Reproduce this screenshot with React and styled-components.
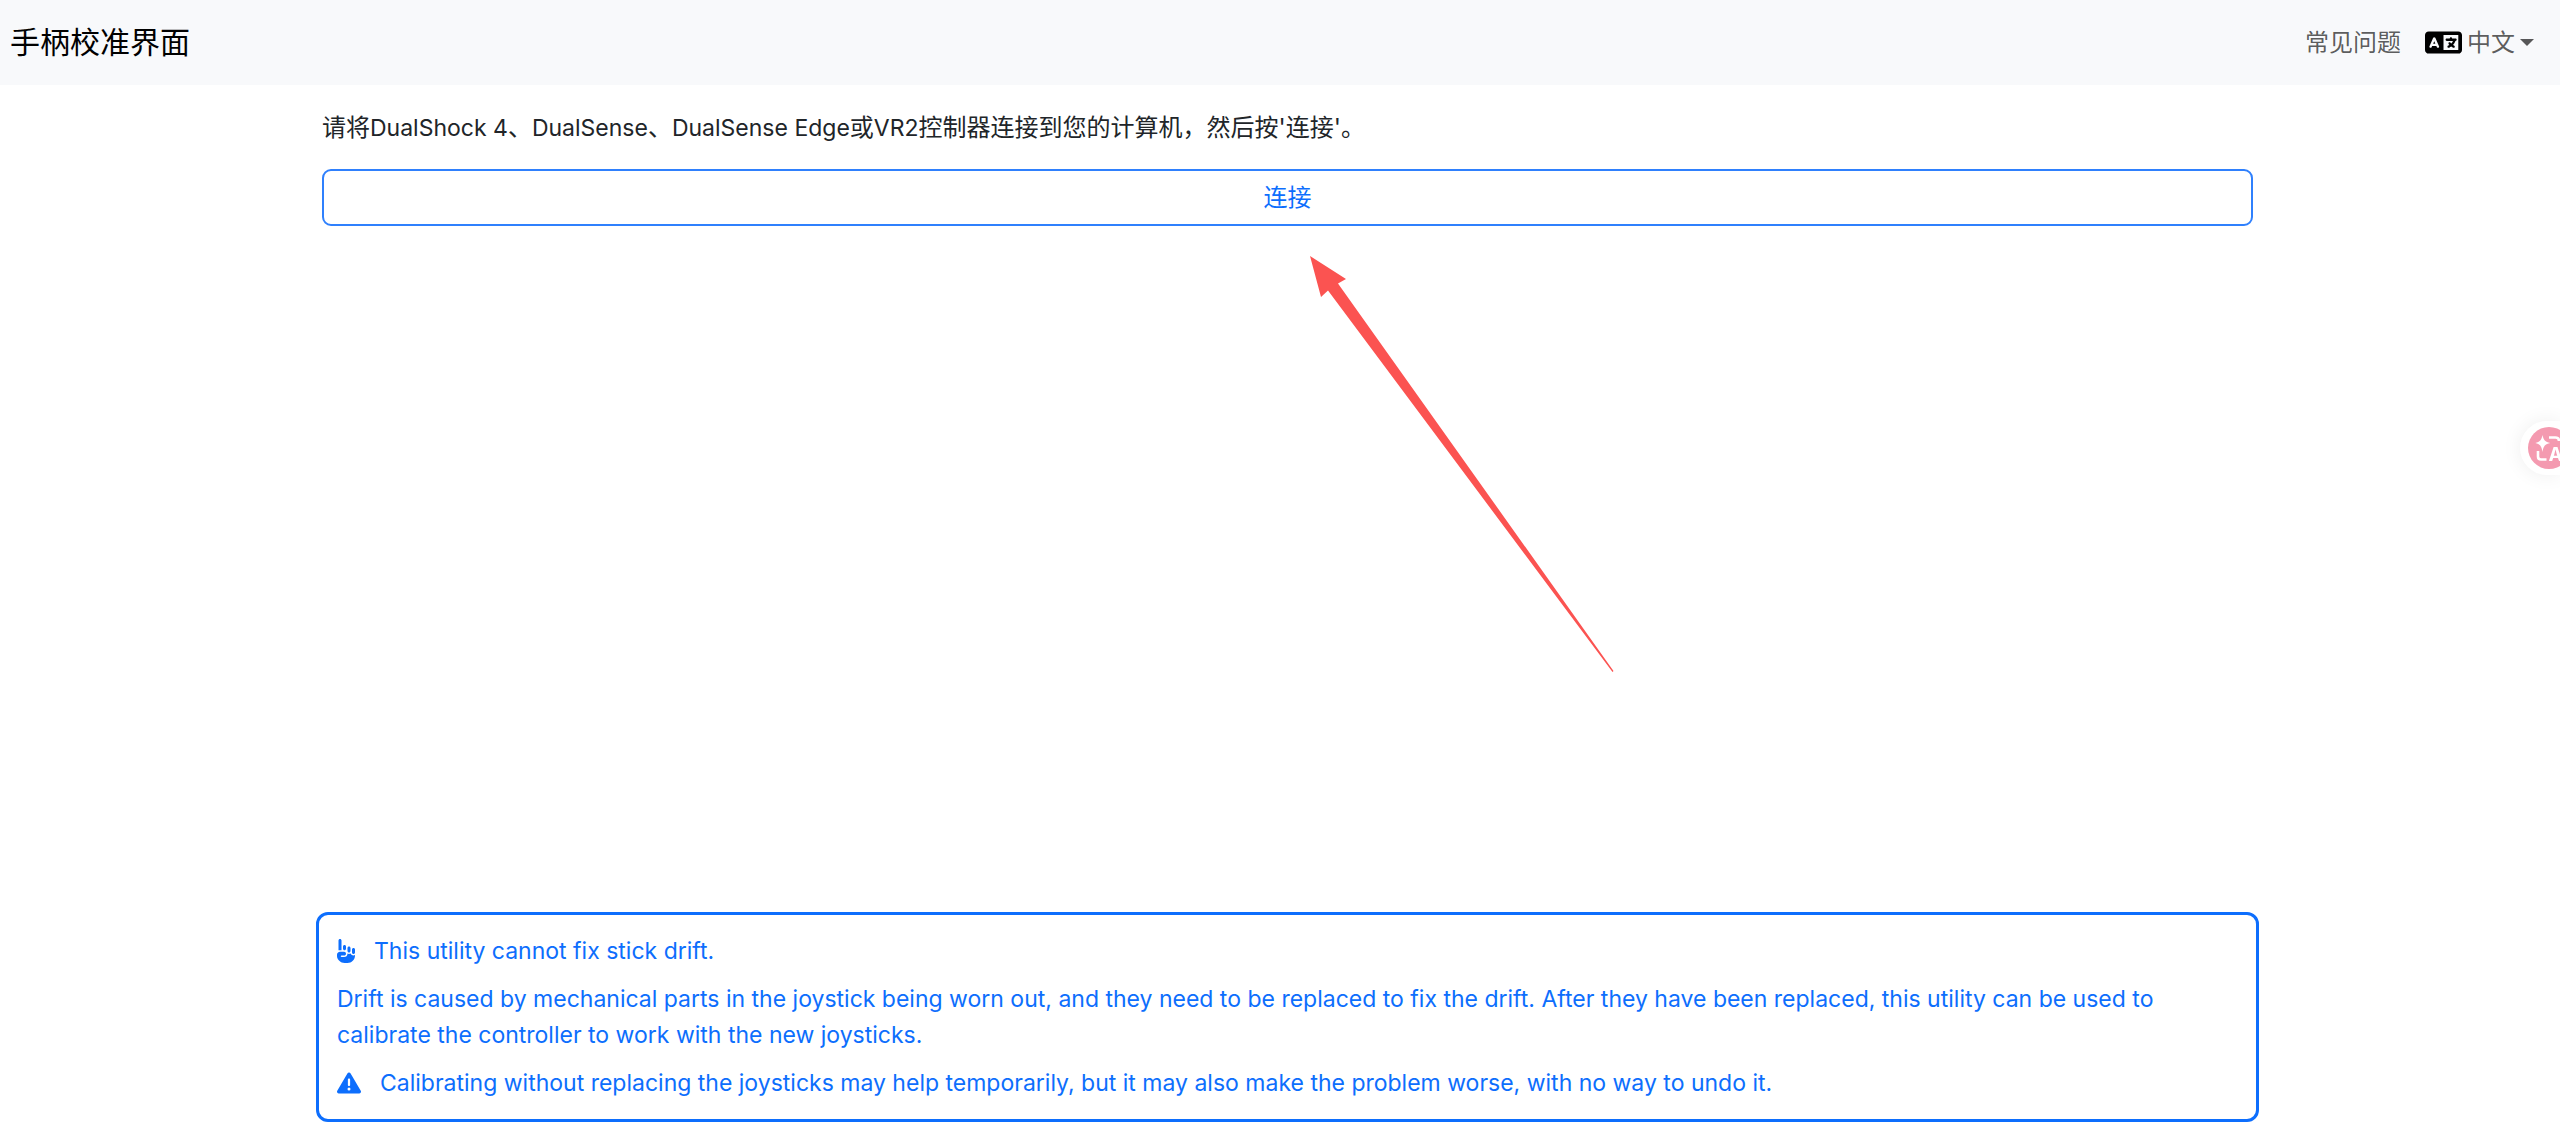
import React from "react";
import styled, { createGlobalStyle } from "styled-components";
import { FaHandPointUp, FaLanguage, FaTriangleExclamation } from "react-icons/fa6";

const GlobalStyle = createGlobalStyle`
  *, *::before, *::after { box-sizing: border-box; }
  body {
    margin: 0;
    background: #fff;
    color: #212529;
    font-family: Inter, "Noto Sans CJK SC", sans-serif;
    font-size: 24px;
    line-height: 36px;
    overflow-x: hidden;
  }
`;

const Page = styled.div`
  position: relative;
  display: flex;
  flex-direction: column;
  min-height: 100vh;
`;

const Navbar = styled.nav`
  display: flex;
  align-items: center;
  justify-content: space-between;
  padding: 20px 26px 20px 10px;
  background: #f8f9fb;
`;

const Brand = styled.a`
  color: #000;
  font-size: 30px;
  line-height: 45px;
  text-decoration: none;
`;

const NavLinks = styled.div`
  display: flex;
  align-items: center;
  gap: 24px;
`;

const NavLink = styled.a`
  color: rgba(0, 0, 0, 0.65);
  text-decoration: none;
`;

const LanguageButton = styled.button`
  display: flex;
  align-items: center;
  gap: 5px;
  padding: 0;
  border: 0;
  background: none;
  color: rgba(0, 0, 0, 0.65);
  font: inherit;
  cursor: pointer;

  svg {
    width: 37px;
    height: 37px;
    color: #000;
  }
`;

const Caret = styled.span`
  border: 7px solid transparent;
  border-top-color: currentColor;
  border-bottom: 0;
`;

const Content = styled.div`
  flex: 1;
  display: flex;
  flex-direction: column;
  justify-content: space-between;
  align-items: center;
  padding: 25px 0 26px 15px;
`;

const Main = styled.main`
  width: 100%;
  max-width: 1931px;
`;

const Intro = styled.p`
  margin: 0 0 23px;
`;

const Device = styled.span`
  font-size: 23px;
`;

const ConnectButton = styled.button`
  display: block;
  width: 100%;
  padding: 9px 18px 8px;
  border: 2px solid #2f80fd;
  border-radius: 9px;
  background: transparent;
  color: #0d6efd;
  font: inherit;
  cursor: pointer;
`;

const Notice = styled.aside`
  display: flex;
  flex-direction: column;
  gap: 12px;
  width: 100%;
  max-width: 1943px;
  padding: 18px;
  border: 3px solid #0d6efd;
  border-radius: 12px;
  color: #0d6efd;
  font-size: 23px;
`;

const NoticeLine = styled.p`
  display: flex;
  align-items: center;
  gap: 19px;
  margin: 0;

  svg {
    flex: none;
    width: ${({ $icon }) => $icon || 24}px;
    height: 24px;
  }
`;

const PointerArrow = styled.svg`
  position: absolute;
  top: 256px;
  left: calc(50% + 30px);
  width: 304px;
  height: 416px;
  fill: #fb5351;
  pointer-events: none;
`;

const TranslateTab = styled.button`
  position: fixed;
  top: 421px;
  right: 0;
  width: 40px;
  height: 54px;
  padding: 6px 0 6px 8px;
  overflow: hidden;
  border: 0;
  border-radius: 27px 0 0 27px;
  background: #fff;
  box-shadow: 0 0 20px rgba(0, 0, 0, 0.07);
  cursor: pointer;

  svg {
    display: block;
    width: 42px;
    height: 42px;
  }
`;

function TranslateIcon() {
  return (
    <svg viewBox="0 0 42 42" aria-hidden="true">
      <circle cx="21" cy="21" r="21" fill="#f49ab0" />
      <path
        d="M14.5 8C15.6 13.4 17 14.8 22.3 16C17 17.2 15.6 18.6 14.5 25C13.4 18.6 12 17.2 7.3 16C12 14.8 13.4 13.4 14.5 8Z"
        fill="#fff"
      />
      <path
        d="M21 10.5H27.5Q31 10.5 31 14M10 24V29.5Q10 32.5 13 32.5H18.5"
        fill="none"
        stroke="#fff"
        strokeWidth="2.6"
      />
      <text x="20.5" y="33.5" fill="#fff" fontFamily="Inter, sans-serif" fontSize="19" fontWeight="700">A</text>
    </svg>
  );
}

export default function App() {
  return (
    <Page>
      <GlobalStyle />
      <Navbar>
        <Brand href="#">手柄校准界面</Brand>
        <NavLinks>
          <NavLink href="#faq">常见问题</NavLink>
          <LanguageButton type="button" aria-haspopup="true">
            <FaLanguage aria-hidden="true" />
            中文
            <Caret />
          </LanguageButton>
        </NavLinks>
      </Navbar>

      <Content>
        <Main>
          <Intro>
            请将<Device>DualShock 4</Device>、<Device>DualSense</Device>、<Device>DualSense Edge</Device>或
            <Device>VR2</Device>控制器连接到您的计算机，然后按'连接'。
          </Intro>
          <ConnectButton type="button">连接</ConnectButton>
        </Main>

        <Notice>
          <NoticeLine $icon={18}>
            <FaHandPointUp aria-hidden="true" />
            This utility cannot fix stick drift.
          </NoticeLine>
          <NoticeLine>
            Drift is caused by mechanical parts in the joystick being worn out, and they need to be replaced to fix the
            drift. After they have been replaced, this utility can be used to calibrate the controller to work with the
            new joysticks.
          </NoticeLine>
          <NoticeLine>
            <FaTriangleExclamation aria-hidden="true" />
            Calibrating without replacing the joysticks may help temporarily, but it may also make the problem worse,
            with no way to undo it.
          </NoticeLine>
        </Notice>
      </Content>

      <PointerArrow viewBox="0 0 304 416" aria-hidden="true">
        <path d="M0 0L36 23L28 27.500L303.500 415L302.500 416L18 34.500L11 41Z" />
      </PointerArrow>

      <TranslateTab type="button" aria-label="翻译">
        <TranslateIcon />
      </TranslateTab>
    </Page>
  );
}
